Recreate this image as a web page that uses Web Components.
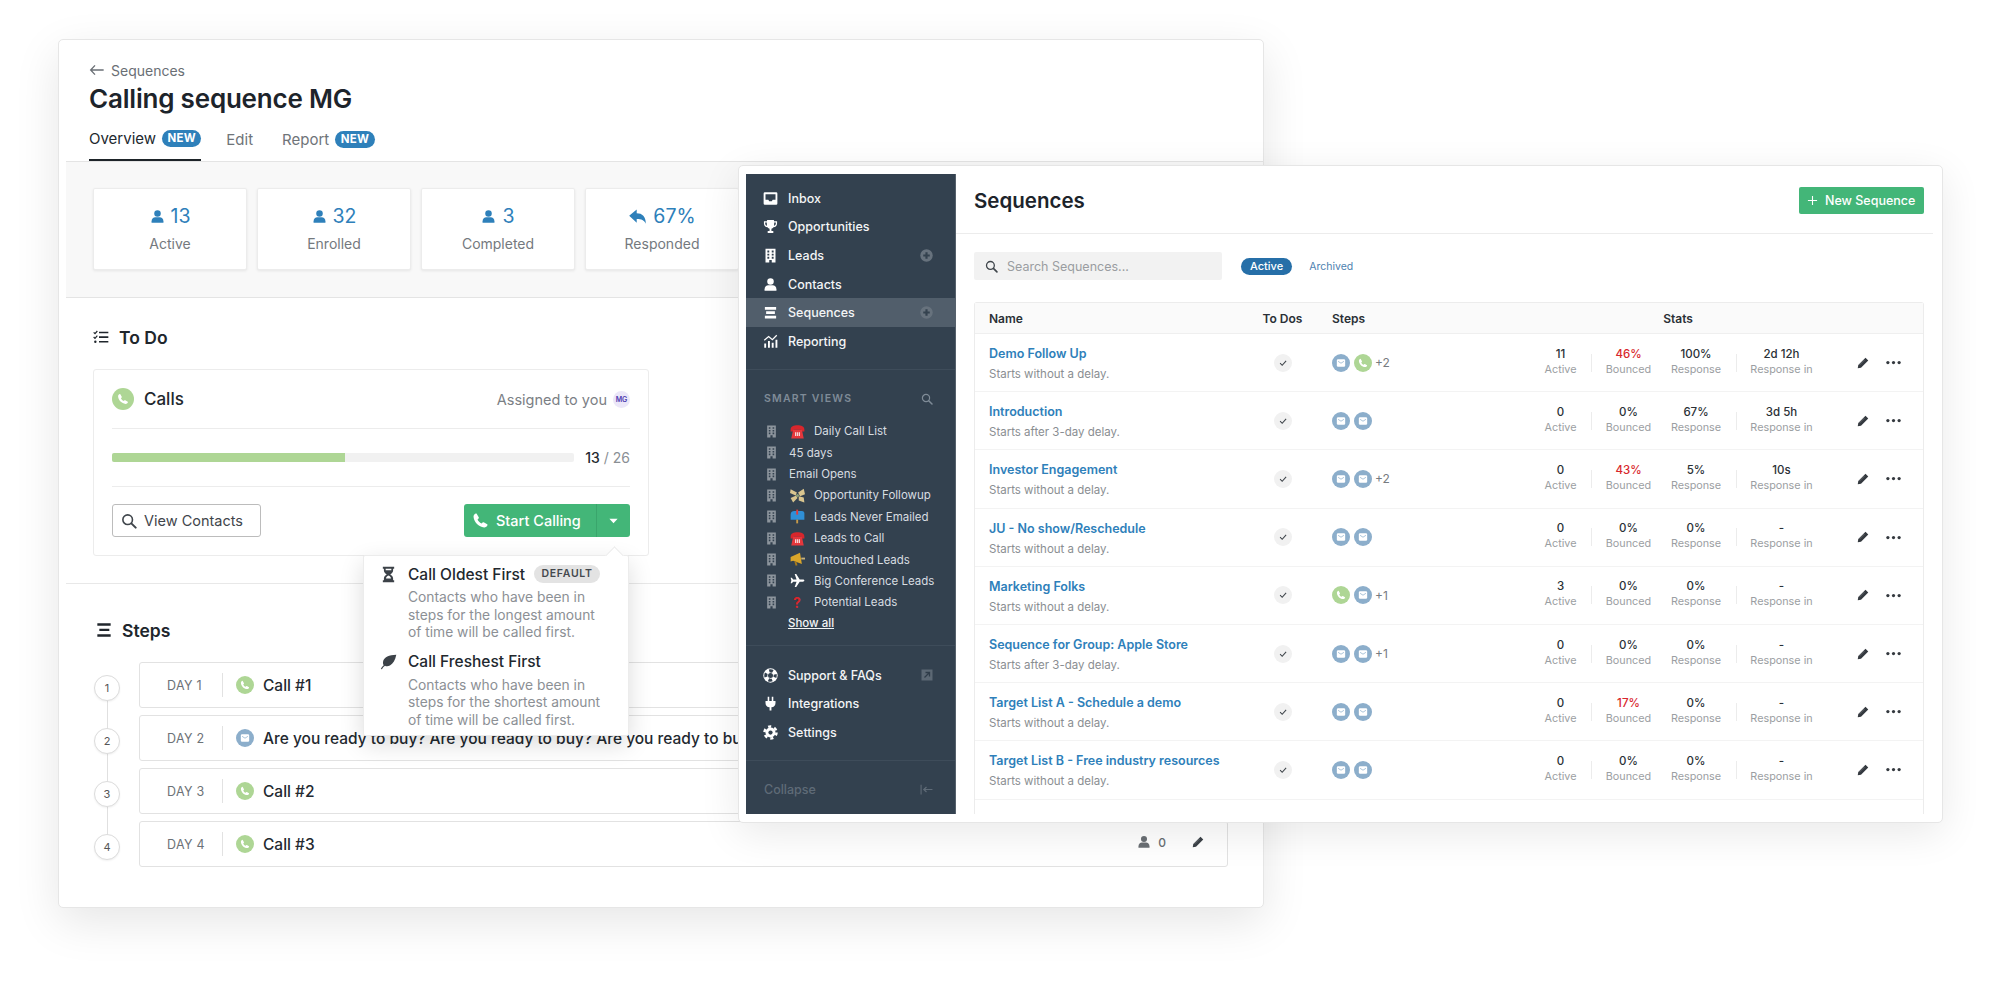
<!DOCTYPE html>
<html lang="en">
<head>
<meta charset="utf-8">
<title>Sequences</title>
<style>
html, body { margin: 0; padding: 0; background: #fff; }
body { position: relative; width: 2000px; height: 982px; overflow: hidden; font-family: Inter, "Liberation Sans", sans-serif; color: #23292f; }
</style>
</head>
<body>

<desk-window x="58" y="39" w="1206" h="869">
  <page-head title="Calling sequence MG"></page-head>
  <stat-band>
    <stat-card icon="user" value="13" label="Active"></stat-card>
    <stat-card icon="user" value="32" label="Enrolled"></stat-card>
    <stat-card icon="user" value="3" label="Completed"></stat-card>
    <stat-card icon="reply" value="67%" label="Responded"></stat-card>
  </stat-band>
  <todo-section></todo-section>
  <steps-section>
    <step-row day="1" kind="phone" first>Call #1</step-row>
    <step-row day="2" kind="mail">Are you ready to buy? Are you ready to buy? Are you ready to buy? Are you ready to buy?</step-row>
    <step-row day="3" kind="phone">Call #2</step-row>
    <step-row day="4" kind="phone" last tools>Call #3</step-row>
  </steps-section>
</desk-window>

<desk-window x="738" y="165" w="1205" h="658" front>
  <seq-app>
    <side-nav slot="nav"></side-nav>
    <seq-head></seq-head>
    <seq-toolbar></seq-toolbar>
    <seq-table>
      <seq-row name="Demo Follow Up" delay="Starts without a delay." steps="mail,phone" more="+2" active="11" bounced="46%" hot response="100%" time="2d 12h"></seq-row>
      <seq-row name="Introduction" delay="Starts after 3-day delay." steps="mail,mail" active="0" bounced="0%" response="67%" time="3d 5h"></seq-row>
      <seq-row name="Investor Engagement" delay="Starts without a delay." steps="mail,mail" more="+2" active="0" bounced="43%" hot response="5%" time="10s"></seq-row>
      <seq-row name="JU - No show/Reschedule" delay="Starts without a delay." steps="mail,mail" active="0" bounced="0%" response="0%" time="-"></seq-row>
      <seq-row name="Marketing Folks" delay="Starts without a delay." steps="phone,mail" more="+1" active="3" bounced="0%" response="0%" time="-"></seq-row>
      <seq-row name="Sequence for Group: Apple Store" delay="Starts after 3-day delay." steps="mail,mail" more="+1" active="0" bounced="0%" response="0%" time="-"></seq-row>
      <seq-row name="Target List A - Schedule a demo" delay="Starts without a delay." steps="mail,mail" active="0" bounced="17%" hot response="0%" time="-"></seq-row>
      <seq-row name="Target List B - Free industry resources" delay="Starts without a delay." steps="mail,mail" active="0" bounced="0%" response="0%" time="-"></seq-row>
    </seq-table>
  </seq-app>
</desk-window>

<script>
const ICONS = {
  user: '<circle cx="12" cy="7" r="5.2"/><path d="M2.5 22v-2.5c0-4 3-6.5 6-6.5h7c3 0 6 2.5 6 6.5V22z"/>',
  reply: '<path d="M1.5 11 11 3v5c7 0 11.5 4 11.5 13-2-4.5-5.5-6-11.5-6v5z"/>',
  back: '<path d="M9 5 2.5 12 9 19M3 12h19" fill="none" stroke="currentColor" stroke-width="2"/>',
  phone: '<path d="M6.6 2.5 9.5 7.5c.3.5.2 1-.2 1.5L7.800 10.600c1 2.400 3.200 4.600 5.600 5.600l1.600-1.500c.5-.4 1-.5 1.500-.2l5 2.900c.5.3.5.8.3 1.300-.8 2.100-2.800 3.300-4.800 3.100C9.500 21 3 14.500 2.200 7 2 5 3.200 3 5.300 2.200c.5-.2 1-.2 1.300.3z"/>',
  search: '<circle cx="10" cy="10" r="7.2" fill="none" stroke="currentColor" stroke-width="2.4"/><path d="M15.5 15.5 22 22" stroke="currentColor" stroke-width="3" stroke-linecap="round"/>',
  hourglass: '<path d="M4 1h16v3h-1.500v2.500c0 2.500-2 4.500-4 5.500 2 1 4 3 4 5.500V20H20v3H4v-3h1.500v-2.500c0-2.500 2-4.500 4-5.500-2-1-4-3-4-5.500V4H4z"/><path d="M8 4h8v2H8zM12 13.500c-2 1-3.500 2.500-3.500 4h7c0-1.500-1.500-3-3.500-4z" fill="#fff"/>',
  leaf: '<path d="M23 2.500C13 3 5.500 5.500 4.300 12.500c-.3 2 .1 3.500.9 4.700C3.300 18.700 2 20.500 1.200 22.500l1.600.6c.9-2.200 2.400-4 4.300-5.200 1.700 1 4.200 1.100 6.900-.4C18.500 15 21.500 10 23 2.500z"/>',
  pencil: '<path d="M17 1.500 22.500 7 8 21.500 1.500 22.500 2.500 16z"/><path d="M15 6 5 16" stroke="#fff" stroke-width=".9" opacity=".5"/>',
  check: '<path d="M5 12.500 10 17.500 19.500 7" fill="none" stroke="currentColor" stroke-width="2.600"/>',
  inbox: '<path fill-rule="evenodd" d="M3 2h18a2 2 0 0 1 2 2v16a2 2 0 0 1-2 2H3a2 2 0 0 1-2-2V4a2 2 0 0 1 2-2zm1 3v9h4.500l1.500 2.500h4l1.500-2.500H20V5z"/>',
  trophy: '<path fill-rule="evenodd" d="M6.500 1.500h11v2h5V7c0 3.500-2.500 5.700-5.700 6-.9 1.400-2.100 2.400-3.300 2.700V19h3v3.500H7.500V19h3v-3.300c-1.200-.3-2.400-1.300-3.300-2.700C4 12.700 1.500 10.500 1.500 7V3.500h5zM3.500 5.500V7c0 2 1.200 3.400 3 3.800-.3-1.500-.4-3.400-.4-5.300zm17 0h-2.600c0 1.900-.1 3.800-.4 5.300 1.800-.4 3-1.800 3-3.800z"/>',
  building: '<path fill-rule="evenodd" d="M4 1h16v22h-6v-4h-4v4H4zM7 4v3h3V4zm7 0v3h3V4zM7 9v3h3V9zm7 0v3h3V9zM7 14v3h3v-3zm7 0v3h3v-3z"/>',
  bars: '<path d="M3 3h18v4.500H3zM5 10h14v4.500H5zM3 17h18v4.500H3z"/>',
  chart: '<path d="M2 15h3v7H2zM8 11h3v11H8zM14 14h3v8h-3zM20 9h3v13h-3z"/><path d="M2 10 9 4l6 5 7-7" fill="none" stroke="currentColor" stroke-width="2"/>',
  lifering: '<circle cx="12" cy="12" r="11.5"/><circle cx="12" cy="12" r="7.5" fill="none" stroke="#33414f" stroke-width="5" stroke-dasharray="6 5.78" stroke-dashoffset="3"/><circle cx="12" cy="12" r="4" fill="#33414f"/>',
  plug: '<path d="M7.500 1h2.500v7h4V1h2.500v7H20v3c0 4-2.500 6.500-6.500 7V23h-3v-5C6.500 17.500 4 15 4 11V8h3.500z"/>',
  cog: '<circle cx="12" cy="12" r="8"/><circle cx="12" cy="12" r="9.6" fill="none" stroke="currentColor" stroke-width="4" stroke-dasharray="5 5.06"/><circle cx="12" cy="12" r="3.4" fill="#33414f"/>',
  external: '<rect x="1" y="1" width="22" height="22" fill="#5c6874"/><path d="M7 17 17 7M9 7h8v8" fill="none" stroke="#2f3c49" stroke-width="2.600"/>',
  addround: '<circle cx="12" cy="12" r="11.5" fill="#67727d"/><path d="M12 6v12M6 12h12" stroke="#34424f" stroke-width="4"/>',
  collapse: '<path d="M2 3v18" stroke="currentColor" stroke-width="2"/><path d="M7 12h16M12 7.500 7 12l5 4.500" fill="none" stroke="currentColor" stroke-width="2.200"/>',
  todo: '<path d="M1 5l2 2 3.500-4M1 12l2 2 3.500-4" fill="none" stroke="currentColor" stroke-width="1.800"/><path d="M9 4h14v2.400H9zM9 11h14v2.400H9zM9 18h14v2.400H9z"/><circle cx="3.500" cy="19.200" r="1.800"/>',
  lines: '<path d="M2 2h20v3.500H2zM5 10h15v3.500H5zM2 18.500h20V22H2z"/>',
  plus: '<path d="M12 2v20M2 12h20" stroke="currentColor" stroke-width="2.400"/>',
  caret: '<path d="M3 8h18l-9 10z"/>',
  dots: '<circle cx="3" cy="12" r="2.600"/><circle cx="12" cy="12" r="2.600"/><circle cx="21" cy="12" r="2.600"/>',
  envelope: '<rect x="2" y="3" width="20" height="18" rx="3"/><path d="M5 8l7 4.500L19 8" fill="none" stroke="#8caecb" stroke-width="1.800"/>',
  e_phone: '<path d="M1 9c0-5 5-7 11-7s11 2 11 7v3h-5V9H6v3H1z" fill="#d8262c"/><path d="M5 9h14l3 14H2z" fill="#e5373c"/><path d="M8 13h2v6H8zM11 13h2v6h-2zM14 13h2v6h-2z" fill="#f5d6d6"/>',
  e_wings: '<path d="M1 2l10 5-2 5-9-4zM13 7l9-6 2 9-8 3zM1 16l9-4 2 4-7 7zM14 13l8 2 1 8-9-3z" fill="#d9c58f"/><circle cx="12" cy="12" r="2.500" fill="#8f9f77"/>',
  e_mail: '<path d="M1 9a6 6 0 0 1 6-6h12a4 4 0 0 1 4 4v10H1z" fill="#2f8fd6"/><path d="M10 1h3v8h-3z" fill="#e23a3a"/><path d="M10 17h3v6h-3z" fill="#c79a4a"/>',
  e_horn: '<path d="M1 8l15-7 3 18-14-5-4 1z" fill="#d9a52a"/><path d="M7 15l2 7 3-1-2-6z" fill="#a87b1c"/><path d="M18 9h6v3h-6z" fill="#c9b27a"/>',
  plane: '<path d="M23 12c0-1-1-1.800-2.500-1.800h-5L10 1.500H7.500l3 8.700H5L3 7.500H1l1.200 4.500L1 16.500h2l2-2.700h5.500l-3 8.700H10l5.500-8.700h5c1.500 0 2.500-.800 2.500-1.800z"/>',
};

class ShadowBase extends HTMLElement {
  constructor() {
    super();
    this.attachShadow({mode: 'open'});
  }
  paint(css, html) {
    this.shadowRoot.innerHTML = `<style>${css}</style>${html}`;
  }
  a(name) {
    return this.getAttribute(name) || '';
  }
}

class UiIcon extends ShadowBase {
  connectedCallback() {
    const size = this.a('size') || 16;
    this.paint(`:host { display: inline-flex; flex: none; width: ${size}px; height: ${size}px; }
      svg { width: 100%; height: 100%; display: block; fill: currentColor; }`,
      `<svg viewBox="0 0 24 24">${ICONS[this.a('name')]}</svg>`);
  }
}
customElements.define('ui-icon', UiIcon);

class StepDot extends ShadowBase {
  connectedCallback() {
    const size = this.a('size') || 18;
    const phone = this.a('kind') === 'phone';
    this.paint(`:host { display: inline-flex; flex: none; align-items: center; justify-content: center; width: ${size}px; height: ${size}px;
        border-radius: 50%; background: ${phone ? '#aed695' : '#8caecb'}; color: #fff; }`,
      `<ui-icon name="${phone ? 'phone' : 'envelope'}" size="${Math.round(size * 0.56)}"></ui-icon>`);
  }
}
customElements.define('step-dot', StepDot);

class DeskWindow extends ShadowBase {
  connectedCallback() {
    const front = this.hasAttribute('front');
    this.paint(`:host { display: block; position: absolute; z-index: ${front ? 2 : 1}; left: ${this.a('x')}px; top: ${this.a('y')}px; width: ${this.a('w')}px; height: ${this.a('h')}px;
        box-sizing: border-box; background: #fff; border: 1px solid #e6e6e6; border-radius: 5px; overflow: hidden;
        box-shadow: ${front ? '0 10px 40px rgba(0,0,0,.09)' : '0 14px 46px rgba(0,0,0,.10)'}; }`,
      `<slot></slot>`);
  }
}
customElements.define('desk-window', DeskWindow);

class PageHead extends ShadowBase {
  connectedCallback() {
    this.paint(`:host { display: block; margin-left: 7px; padding: 22px 0 0 23px; height: 99px; border-bottom: 1px solid #e4e4e4; box-sizing: content-box; }
      .crumb { display: flex; align-items: center; gap: 6px; height: 16px; font-size: 14px; color: #6a6f75; }
      h1 { margin: 5px 0 0; font-size: 26px; line-height: 32px; font-weight: 600; color: #1d242b; letter-spacing: -.2px; }
      nav { display: flex; height: 44px; margin-top: 2px; font-size: 15px; color: #6f7479; }
      .tab { display: flex; align-items: center; gap: 6px; box-sizing: border-box; height: 44px; margin-right: 25px; padding-top: 1px; }
      .tab.ed { margin-right: 29px; }
      .tab.on { color: #22282e; border-bottom: 2px solid #1e2429; }
      b { display: inline-block; font-size: 11.5px; font-weight: 700; line-height: 17px; padding: 0 5.5px; border-radius: 9px; background: #2e80ba; color: #fff; letter-spacing: .2px; }`,
      `<div class="crumb"><ui-icon name="back" size="16"></ui-icon>Sequences</div>
       <h1>${this.a('title')}</h1>
       <nav><span class="tab on">Overview <b>NEW</b></span><span class="tab ed">Edit</span><span class="tab">Report <b>NEW</b></span></nav>`);
  }
}
customElements.define('page-head', PageHead);

class StatBand extends ShadowBase {
  connectedCallback() {
    this.paint(`:host { display: flex; gap: 10px; margin-left: 7px; padding: 26px 0 27px 27px; background: #f8f8f8; border-bottom: 1px solid #e4e4e4; }`, `<slot></slot>`);
  }
}
customElements.define('stat-band', StatBand);

class StatCard extends ShadowBase {
  connectedCallback() {
    this.paint(`:host { display: flex; flex-direction: column; align-items: center; box-sizing: border-box; width: 154px; height: 82px; background: #fff; border: 1px solid #ececec; border-radius: 2px; box-shadow: 0 1px 3px rgba(0,0,0,.08); }
      .num { display: flex; align-items: center; gap: 6px; margin-top: 15px; height: 24px; font-size: 19.5px; color: #2e80ba; }
      .lab { margin-top: 6px; font-size: 14px; line-height: 20px; color: #74797e; }`,
      `<div class="num"><ui-icon name="${this.a('icon')}" size="${this.a('icon') === 'reply' ? 19 : 15}"></ui-icon>${this.a('value')}</div><div class="lab">${this.a('label')}</div>`);
  }
}
customElements.define('stat-card', StatCard);

class SortMenu extends ShadowBase {
  connectedCallback() {
    this.paint(`:host { display: block; position: absolute; left: 269px; top: 185px; width: 266px; height: 181px; box-sizing: border-box; padding: 9px 0 0 16px; background: #fff; border: 1px solid #ececec; border-radius: 2px; box-shadow: 0 8px 24px rgba(0,0,0,.14); z-index: 3; }
      .tip { position: absolute; right: 7px; top: -7px; width: 12px; height: 12px; background: #fff; border-left: 1px solid #ececec; border-top: 1px solid #ececec; transform: rotate(45deg); }
      .opt { display: grid; grid-template-columns: 28px auto; }
      .opt + .opt { margin-top: 11px; }
      ui-icon { color: #3c4248; align-self: center; }
      .ttl { display: flex; align-items: center; gap: 9px; height: 18px; font-size: 15.5px; font-weight: 500; color: #22282e; }
      .dsc { grid-column: 2; margin: 6px 0 0; font-size: 13.8px; line-height: 17.6px; color: #8c9095; }
      b { font-size: 10.5px; font-weight: 600; letter-spacing: .7px; padding: 0 7.5px; line-height: 18px; border-radius: 9px; background: #e3e3e3; color: #43484d; }`,
      `<div class="tip"></div>
       <div class="opt"><ui-icon name="hourglass" size="17"></ui-icon><div class="ttl">Call Oldest First <b>DEFAULT</b></div>
         <p class="dsc">Contacts who have been in<br>steps for the longest amount<br>of time will be called first.</p></div>
       <div class="opt"><ui-icon name="leaf" size="17"></ui-icon><div class="ttl">Call Freshest First</div>
         <p class="dsc">Contacts who have been in<br>steps for the shortest amount<br>of time will be called first.</p></div>`);
  }
}
customElements.define('sort-menu', SortMenu);

class TodoSection extends ShadowBase {
  connectedCallback() {
    this.paint(`:host { display: block; position: relative; z-index: 2; margin-left: 7px; padding: 27px 0 27px 27px; border-bottom: 1px solid #e8e8e8; }
      h2 { display: flex; align-items: center; gap: 10px; height: 24px; margin: 0; font-size: 17.5px; font-weight: 600; color: #20262c; }
      .card { position: relative; box-sizing: border-box; width: 556px; height: 187px; margin-top: 20px; padding: 0 18px; border: 1px solid #ececec; border-radius: 3px; background: #fff; }
      .top { display: flex; align-items: center; height: 58px; border-bottom: 1px solid #ececec; }
      .top strong { margin-left: 10px; font-size: 17px; font-weight: 500; color: #22282e; }
      .who { margin-left: auto; margin-right: 6px; font-size: 14.5px; color: #7b8085; }
      .av { display: flex; align-items: center; justify-content: center; width: 17px; height: 17px; border-radius: 50%; background: #ebe7f8; color: #4f3bb0; font-size: 7px; font-weight: 600; }
      .prog { display: flex; align-items: center; height: 57px; border-bottom: 1px solid #ececec; gap: 10px; font-size: 14px; color: #8a8f94; }
      .track { width: 466px; height: 9px; background: #f1f1f1; border-radius: 2px; overflow: hidden; }
      .fill { width: 233px; height: 9px; background: #aed695; }
      .prog span { white-space: nowrap; margin-left: 1px; }
      .prog em { font-style: normal; font-weight: 500; color: #23292f; }
      .act { display: flex; justify-content: space-between; padding-top: 17px; }
      .view { display: flex; align-items: center; gap: 7px; box-sizing: border-box; width: 149px; height: 33px; padding-left: 8px; border: 1px solid #bcbcbc; border-radius: 3px; font-size: 14.5px; color: #3f454b; }
      .go { display: flex; height: 33px; width: 166px; border-radius: 3px; background: #43b678; color: #fff; font-size: 14.5px; font-weight: 500; }
      .go > div { display: flex; align-items: center; gap: 7px; padding-left: 8px; width: 133px; box-sizing: border-box; border-right: 1px solid #3aa56c; }
      .go > span { flex: 1; display: flex; align-items: center; justify-content: center; }`,
      `<h2><ui-icon name="todo" size="16"></ui-icon>To Do</h2>
       <div class="card">
         <div class="top"><step-dot kind="phone" size="22"></step-dot><strong>Calls</strong><span class="who">Assigned to you</span><span class="av">MG</span></div>
         <div class="prog"><div class="track"><div class="fill"></div></div><span><em>13</em> / 26</span></div>
         <div class="act">
           <div class="view"><ui-icon name="search" size="16"></ui-icon>View Contacts</div>
           <div class="go"><div><ui-icon name="phone" size="17"></ui-icon>Start Calling</div><span><ui-icon name="caret" size="11"></ui-icon></span></div>
         </div>
         <sort-menu></sort-menu>
       </div>`);
  }
}
customElements.define('todo-section', TodoSection);

class StepsSection extends ShadowBase {
  connectedCallback() {
    this.paint(`:host { display: block; margin-left: 7px; padding: 34px 0 0 30px; }
      h2 { display: flex; align-items: center; gap: 10px; height: 24px; margin: 0 0 20px; font-size: 17.5px; font-weight: 600; color: #20262c; }
      .list { display: flex; flex-direction: column; gap: 8px; }`,
      `<h2><ui-icon name="lines" size="16"></ui-icon>Steps</h2><div class="list"><slot></slot></div>`);
  }
}
customElements.define('steps-section', StepsSection);

class StepRow extends ShadowBase {
  connectedCallback() {
    const tools = this.hasAttribute('tools');
    const last = this.hasAttribute('last');
    this.paint(`:host { display: grid; grid-template-columns: 26px 1089px; gap: 19px; height: 45px; position: relative; margin-left: -2px; }
      .node { box-sizing: border-box; position: relative; z-index: 1; width: 26px; height: 26px; margin-top: 13px; border-radius: 50%; background: #fff; border: 1px solid #dcdcdc; box-shadow: 0 1px 2px rgba(0,0,0,.06); display: flex; align-items: center; justify-content: center; font-size: 11px; color: #555; }
      .wire { position: absolute; left: 12.5px; top: 26px; width: 1px; height: 53px; background: #e0e0e0; display: ${last ? 'none' : 'block'}; }
      .card { display: flex; align-items: center; box-sizing: border-box; height: 46px; border: 1px solid #e2e2e2; border-radius: 3px; background: #fff; overflow: hidden; }
      .day { width: 82px; box-sizing: border-box; padding-left: 27px; font-size: 12.5px; letter-spacing: .3px; color: #6d7277; }
      .sep { width: 1px; height: 24px; background: #e2e2e2; margin-right: 13px; }
      .txt { margin-left: 9px; font-size: 15.5px; font-weight: 500; color: #23292f; white-space: nowrap; flex: 1; }
      .tools { display: ${tools ? 'flex' : 'none'}; align-items: center; gap: 7px; margin-right: 23px; font-size: 12px; font-weight: 500; color: #6a6f74; margin-top: -4px; }
      .tools ui-icon:last-child { margin-left: 19px; color: #3c4248; }`,
      `<div class="wire"></div><div class="node">${this.a('day')}</div>
       <div class="card"><div class="day">DAY ${this.a('day')}</div><div class="sep"></div>
         <step-dot kind="${this.a('kind')}" size="18"></step-dot><div class="txt"><slot></slot></div>
         <div class="tools"><ui-icon name="user" size="14"></ui-icon>0<ui-icon name="pencil" size="12"></ui-icon></div></div>`);
  }
}
customElements.define('step-row', StepRow);

class SeqApp extends ShadowBase {
  connectedCallback() {
    this.paint(`:host { display: flex; height: 640px; margin: 8px 9px 0 7px; }
      main { flex: 1; min-width: 0; padding-left: 18px; overflow: hidden; height: 640px; }`,
      `<slot name="nav"></slot><main><slot></slot></main>`);
  }
}
customElements.define('seq-app', SeqApp);

class NavItem extends ShadowBase {
  connectedCallback() {
    const extra = this.a('extra');
    this.paint(`:host { display: flex; align-items: center; height: 28.6px; padding: 0 22px 0 17px; font-size: 12.5px; font-weight: 500; color: #f3f5f6; background: ${this.hasAttribute('on') ? '#515e6b' : 'transparent'}; }
      .ico { color: #fff; margin-right: 10px; }
      .end { margin-left: auto; }`,
      `<ui-icon class="ico" name="${this.a('icon')}" size="15"></ui-icon><slot></slot>${extra ? `<ui-icon class="end" name="${extra}" size="${extra === 'external' ? 12 : 13}"></ui-icon>` : ''}`);
  }
}
customElements.define('nav-item', NavItem);

class SmartView extends ShadowBase {
  connectedCallback() {
    const e = this.a('emoji');
    let mark = '';
    if (e === 'question') mark = `<span class="mk q">?</span>`;
    else if (e === 'plane') mark = `<span class="mk"><ui-icon name="plane" size="15" style="color:#fff"></ui-icon></span>`;
    else if (e) mark = `<span class="mk"><ui-icon name="${e}" size="15"></ui-icon></span>`;
    this.paint(`:host { display: flex; align-items: center; height: 21.4px; padding-left: 19px; font-size: 11.5px; color: #d8dde1; }
      .bd { color: #8d959d; margin-right: 11px; }
      .mk { display: flex; justify-content: center; width: 16px; margin-right: 9px; }
      .q { color: #d8262c; font-weight: 700; font-size: 14px; line-height: 15px; }`,
      `<ui-icon class="bd" name="building" size="13"></ui-icon>${mark}<slot></slot>`);
  }
}
customElements.define('smart-view', SmartView);

class SideNav extends ShadowBase {
  connectedCallback() {
    this.paint(`:host { display: block; flex: none; width: 210px; height: 640px; background: #33414f; border-right: 1px solid #56616c; box-sizing: border-box; padding-top: 10px; }
      .grp { padding-bottom: 13px; border-bottom: 1px solid #3e4c5a; }
      .smart { padding: 21px 0 12px; border-bottom: 1px solid #3e4c5a; }
      .cap { display: flex; justify-content: space-between; align-items: center; height: 16px; padding: 0 22px 0 18px; margin-bottom: 14px; font-size: 10.5px; font-weight: 600; letter-spacing: 1.2px; color: #7f8b97; }
      .all { height: 20px; line-height: 20px; padding-left: 42px; font-size: 11.5px; font-weight: 500; color: #f3f5f6; text-decoration: underline; }
      .low { padding-top: 15px; padding-bottom: 13px; border-bottom: 1px solid #3e4c5a; }
      .fold { display: flex; justify-content: space-between; align-items: center; height: 20px; margin-top: 19px; padding: 0 22px 0 18px; font-size: 12.5px; font-weight: 500; color: #5f6b77; }`,
      `<div class="grp">
         <nav-item icon="inbox">Inbox</nav-item>
         <nav-item icon="trophy">Opportunities</nav-item>
         <nav-item icon="building" extra="addround">Leads</nav-item>
         <nav-item icon="user">Contacts</nav-item>
         <nav-item icon="bars" extra="addround" on>Sequences</nav-item>
         <nav-item icon="chart">Reporting</nav-item>
       </div>
       <div class="smart">
         <div class="cap">SMART VIEWS<ui-icon name="search" size="12"></ui-icon></div>
         <smart-view emoji="e_phone">Daily Call List</smart-view>
         <smart-view>45 days</smart-view>
         <smart-view>Email Opens</smart-view>
         <smart-view emoji="e_wings">Opportunity Followup</smart-view>
         <smart-view emoji="e_mail">Leads Never Emailed</smart-view>
         <smart-view emoji="e_phone">Leads to Call</smart-view>
         <smart-view emoji="e_horn">Untouched Leads</smart-view>
         <smart-view emoji="plane">Big Conference Leads</smart-view>
         <smart-view emoji="question">Potential Leads</smart-view>
         <div class="all">Show all</div>
       </div>
       <div class="low">
         <nav-item icon="lifering" extra="external">Support &amp; FAQs</nav-item>
         <nav-item icon="plug">Integrations</nav-item>
         <nav-item icon="cog">Settings</nav-item>
       </div>
       <div class="fold">Collapse<ui-icon name="collapse" size="13"></ui-icon></div>`);
  }
}
customElements.define('side-nav', SideNav);

class SeqHead extends ShadowBase {
  connectedCallback() {
    this.paint(`:host { display: flex; align-items: center; justify-content: space-between; box-sizing: border-box; height: 60px; margin-left: -18px; padding: 0 9px 6px 18px; border-bottom: 1px solid #ececec; }
      h2 { margin: 0; font-size: 20.5px; font-weight: 600; color: #1d242b; }
      .add { display: flex; align-items: center; gap: 7px; box-sizing: border-box; width: 125px; height: 27px; padding-left: 8px; border-radius: 2px; background: #43b678; color: #fff; font-size: 12.5px; font-weight: 500; }`,
      `<h2>Sequences</h2><div class="add"><ui-icon name="plus" size="11"></ui-icon>New Sequence</div>`);
  }
}
customElements.define('seq-head', SeqHead);

class SeqToolbar extends ShadowBase {
  connectedCallback() {
    this.paint(`:host { display: flex; align-items: center; margin-top: 18px; height: 28px; }
      .box { display: flex; align-items: center; gap: 9px; box-sizing: border-box; width: 248px; height: 28px; padding-left: 11px; background: #f2f2f2; border-radius: 2px; font-size: 12.5px; color: #9a9da1; }
      .box ui-icon { color: #3f454b; }
      .pill { margin-left: 19px; height: 17px; line-height: 17px; padding: 0 9px; border-radius: 9px; background: #266fa8; color: #fff; font-size: 11px; font-weight: 500; }
      a { margin-left: 17px; font-size: 10.5px; color: #4e82b0; }`,
      `<div class="box"><ui-icon name="search" size="13"></ui-icon>Search Sequences...</div><span class="pill">Active</span><a>Archived</a>`);
  }
}
customElements.define('seq-toolbar', SeqToolbar);

const SEQ_COLS = '258px 71px 212px 61px 1px 73px 71px 1px 89px 1fr';

class SeqTable extends ShadowBase {
  connectedCallback() {
    this.paint(`:host { display: block; width: 950px; height: 520px; margin-top: 22px; box-sizing: border-box; border: 1px solid #ececec; border-bottom: 0; border-radius: 3px 3px 0 0; }
      header { display: grid; grid-template-columns: 258px 71px 212px 1fr; align-items: center; height: 30px; padding-left: 14px; background: #fafafa; border-bottom: 1px solid #efefef; font-size: 12px; font-weight: 600; color: #2a3036; }
      header span:nth-child(2) { text-align: center; }
      header span:nth-child(3) { padding-left: 14px; }
      header span:nth-child(4) { text-align: center; padding-right: 97px; }`,
      `<header><span>Name</span><span>To Dos</span><span>Steps</span><span>Stats</span></header><slot></slot>`);
  }
}
customElements.define('seq-table', SeqTable);

class StatCell extends ShadowBase {
  connectedCallback() {
    const hot = this.hasAttribute('hot');
    this.paint(`:host { display: block; text-align: center; margin-top: -2px; }
      b { display: block; font-size: 11.5px; line-height: 15px; font-weight: 500; color: ${hot ? '#d8262c' : '#2a3036'}; }
      span { display: block; font-size: 10.8px; line-height: 15px; color: #9b9ea2; white-space: nowrap; }`,
      `<b>${this.a('value')}</b><span>${this.a('label')}</span>`);
  }
}
customElements.define('stat-cell', StatCell);

class SeqRow extends ShadowBase {
  connectedCallback() {
    const steps = this.a('steps').split(',').map(k => `<step-dot kind="${k}" size="18"></step-dot>`).join('');
    const hot = this.hasAttribute('hot') ? 'hot' : '';
    this.paint(`:host { display: grid; grid-template-columns: ${SEQ_COLS}; align-items: center; box-sizing: border-box; height: 58.2px; padding-left: 14px; border-bottom: 1px solid #f3f3f3; }
      .n { padding-top: 3px; }
      .n a { display: block; font-size: 12.5px; line-height: 20px; font-weight: 600; color: #2e80ba; white-space: nowrap; }
      .n span { display: block; font-size: 11.5px; line-height: 20px; color: #8a8e92; white-space: nowrap; }
      .chk { justify-self: center; display: flex; align-items: center; justify-content: center; width: 18px; height: 18px; border-radius: 50%; background: #f1f1f1; color: #3f454b; }
      .st { display: flex; align-items: center; gap: 4px; padding-left: 14px; font-size: 12px; color: #777b80; }
      .st em { font-style: normal; margin-left: -1px; }
      .sep { width: 1px; height: 18px; background: #ececec; }
      .rsp { padding-right: 9px; }
      .tl { display: flex; align-items: center; padding-left: 31px; color: #34393f; }
      .tl ui-icon + ui-icon { margin-left: 17px; }`,
      `<div class="n"><a>${this.a('name')}</a><span>${this.a('delay')}</span></div>
       <div class="chk"><ui-icon name="check" size="10"></ui-icon></div>
       <div class="st">${steps}${this.a('more') ? `<em>${this.a('more')}</em>` : ''}</div>
       <stat-cell value="${this.a('active')}" label="Active"></stat-cell><i class="sep"></i>
       <stat-cell value="${this.a('bounced')}" label="Bounced" ${hot}></stat-cell>
       <stat-cell class="rsp" value="${this.a('response')}" label="Response"></stat-cell><i class="sep"></i>
       <stat-cell value="${this.a('time')}" label="Response in"></stat-cell>
       <div class="tl"><ui-icon name="pencil" size="12"></ui-icon><ui-icon name="dots" size="15"></ui-icon></div>`);
  }
}
customElements.define('seq-row', SeqRow);
</script>
</body>
</html>
